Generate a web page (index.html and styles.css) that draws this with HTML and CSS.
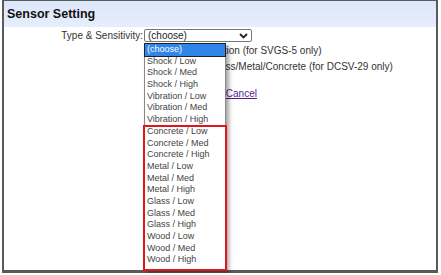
FILE: index.html
```html
<!DOCTYPE html>
<html lang="en">

<head>
    <meta charset="UTF-8">
    <title>Sensor Setting</title>
    <link rel="stylesheet" href="styles.css">
</head>

<body>
    <div class="panel">
        <div class="panel-head">Sensor Setting</div>
        <div class="panel-body">
            <div class="row">
                <div class="label">Type &amp; Sensitivity:</div>
                <div class="value">
                    <div class="select">
                        <span>(choose)</span>
                        <svg width="9" height="6" viewBox="0 0 9 6"><path d="M1 1 L4.5 4.5 L8 1" fill="none" stroke="#222" stroke-width="1.8"/></svg>
                    </div>
                    <p class="note note-first">Shock/Vibration (for SVGS-5 only)</p>
                    <p class="note note-second">Glass/Metal/Concrete (for DCSV-29 only)</p>
                    <p class="actions"><button class="save">Save</button><a href="#" class="cancel">Cancel</a></p>
                </div>
            </div>
        </div>

        <ul class="dropdown">
            <li class="active">(choose)</li>
            <li>Shock / Low</li>
            <li>Shock / Med</li>
            <li>Shock / High</li>
            <li>Vibration / Low</li>
            <li>Vibration / Med</li>
            <li>Vibration / High</li>
            <li>Concrete / Low</li>
            <li>Concrete / Med</li>
            <li>Concrete / High</li>
            <li>Metal / Low</li>
            <li>Metal / Med</li>
            <li>Metal / High</li>
            <li>Glass / Low</li>
            <li>Glass / Med</li>
            <li>Glass / High</li>
            <li>Wood / Low</li>
            <li>Wood / Med</li>
            <li>Wood / High</li>
        </ul>
        <div class="highlight"></div>
    </div>
</body>

</html>
```

FILE: styles.css
```css
body {
    margin: 0;
    padding: 0;
    background-color: white;
    font-family: "Liberation Sans", Arial, sans-serif;
}

.panel {
    position: relative;
    margin: 0 3px 0 2px;
    height: 269px;
    border: 2px solid #5a5a5a;
    border-top-width: 1px;
    border-bottom-width: 3px;
    background-color: white;
}

.panel-head {
    height: 26px;
    padding-left: 3px;
    line-height: 26px;
    font-size: 12.5px;
    font-weight: bold;
    color: #111;
    background: linear-gradient(#dce7fa, #e6eefc);
}

.panel-body {
    padding-top: 2px;
}

.row {
    display: flex;
    font-size: 10px;
    color: #333;
}

.label {
    width: 139px;
    padding-right: 1px;
    text-align: right;
    line-height: 13px;
}

.value {
    flex: 1;
}

.select {
    display: flex;
    align-items: center;
    justify-content: space-between;
    width: 100px;
    height: 11px;
    padding: 0 3px;
    border: 1px solid #777;
    border-radius: 2px;
    background-color: white;
    color: #222;
}

.note {
    margin: 0;
    line-height: 16px;
}

.note-first {
    margin-top: 1px;
    padding-left: 26px;
}

.note-second {
    padding-left: 66px;
}

.actions {
    margin: 10px 0 0;
}

.save {
    font-size: 10px;
    padding: 1px 6px;
}

.cancel {
    margin-left: 43px;
    color: #551a8b;
}

.dropdown {
    position: absolute;
    left: 140px;
    top: 42px;
    width: 80px;
    margin: 0;
    padding: 0 0 3px;
    list-style: none;
    border: 1px solid #888;
    background-color: white;
    box-shadow: 3px 3px 4px rgba(0, 0, 0, 0.35);
    font-size: 9px;
    color: #444;
}

.dropdown li {
    height: 11.7px;
    line-height: 11.7px;
    padding-left: 2px;
}

.dropdown li.active {
    background-color: #2f86e8;
    color: white;
    outline: 1px solid #222;
}

.highlight {
    position: absolute;
    left: 139px;
    top: 124px;
    width: 80px;
    height: 142px;
    border: 2px solid #e0161b;
}
```
